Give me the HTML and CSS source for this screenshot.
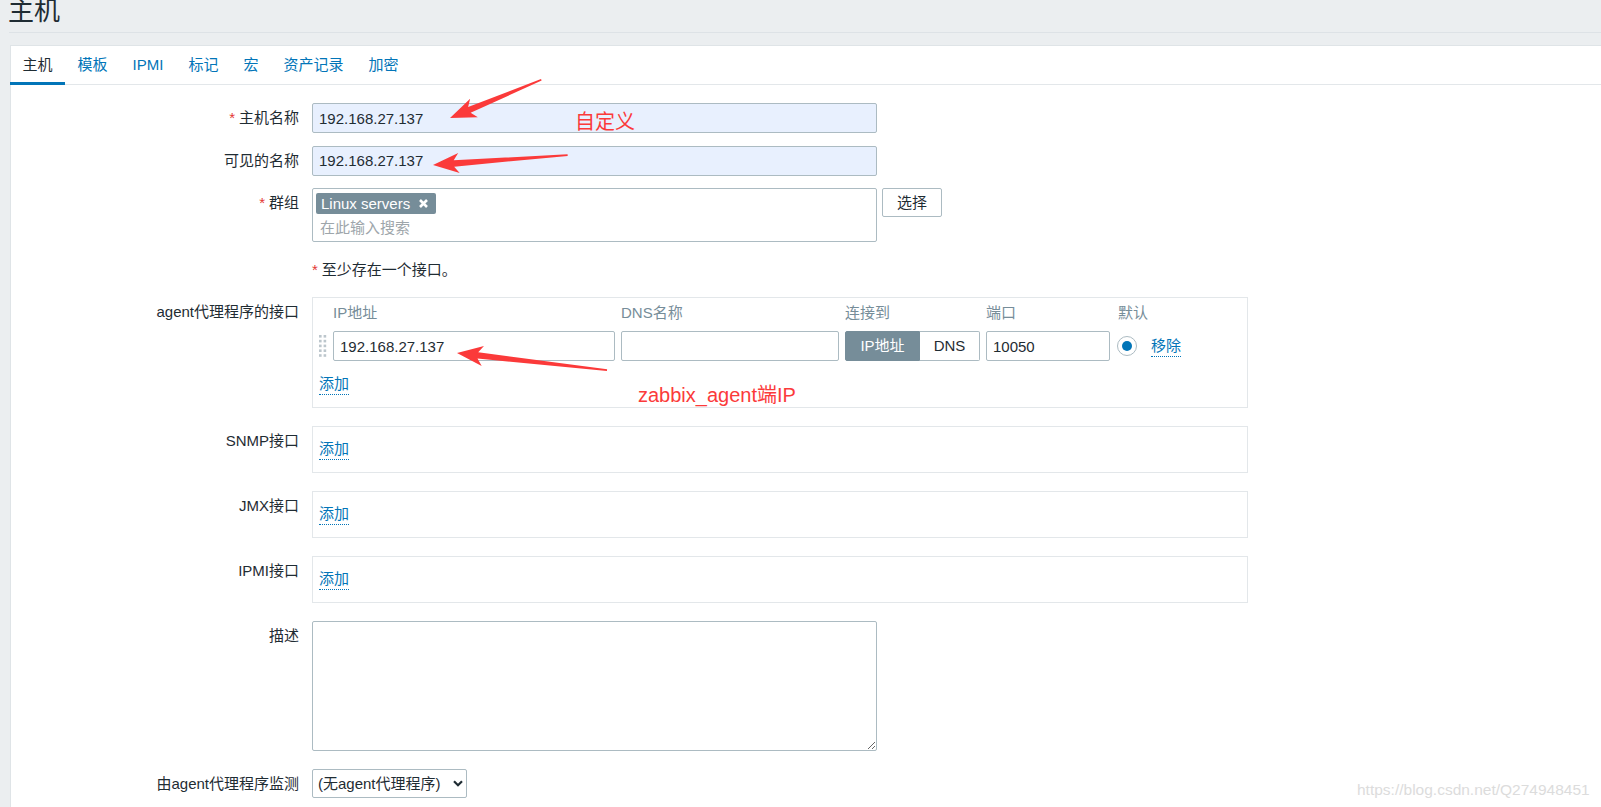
FILE: index.html
```html
<!DOCTYPE html>
<html lang="zh-CN">
<head>
<meta charset="utf-8">
<title>主机</title>
<link rel="stylesheet" href="styles.css">
</head>
<body>
<header class="page-header">
  <h1 class="page-title">主机</h1>
</header>
<main class="panel">
  <nav class="tabs">
    <a class="tab tab-active">主机</a>
    <a class="tab">模板</a>
    <a class="tab">IPMI</a>
    <a class="tab">标记</a>
    <a class="tab">宏</a>
    <a class="tab">资产记录</a>
    <a class="tab">加密</a>
  </nav>
  <form class="form">
    <div class="row">
      <div class="label"><span class="req">*</span>主机名称</div>
      <input class="input input-wide input-autofill" type="text" value="192.168.27.137">
    </div>
    <div class="row">
      <div class="label">可见的名称</div>
      <input class="input input-wide input-autofill" type="text" value="192.168.27.137">
    </div>
    <div class="row">
      <div class="label"><span class="req">*</span>群组</div>
      <div class="field-inline">
        <div class="multiselect">
          <div class="ms-tags">
            <span class="tag">Linux servers<svg class="tag-x" width="9" height="9" viewBox="0 0 9 9"><path d="M1 1 L8 8 M8 1 L1 8" stroke="#fff" stroke-width="2.6" fill="none"/></svg></span>
          </div>
          <div class="ms-placeholder">在此输入搜索</div>
        </div>
        <button type="button" class="btn">选择</button>
      </div>
    </div>
    <div class="row">
      <div class="label"></div>
      <div class="note"><span class="req">*</span>至少存在一个接口。</div>
    </div>
    <div class="row">
      <div class="label">agent代理程序的接口</div>
      <div class="iface iface-agent">
        <div class="iface-grid iface-head">
          <span></span><span>IP地址</span><span>DNS名称</span><span>连接到</span><span>端口</span><span class="head-default">默认</span><span></span>
        </div>
        <div class="iface-grid iface-line">
          <svg class="drag" width="8" height="22" viewBox="0 0 8 22">
            <g fill="#bcc6cc">
              <rect x="0" y="0" width="2.6" height="2.6"/><rect x="4.6" y="0" width="2.6" height="2.6"/>
              <rect x="0" y="4.8" width="2.6" height="2.6"/><rect x="4.6" y="4.8" width="2.6" height="2.6"/>
              <rect x="0" y="9.6" width="2.6" height="2.6"/><rect x="4.6" y="9.6" width="2.6" height="2.6"/>
              <rect x="0" y="14.4" width="2.6" height="2.6"/><rect x="4.6" y="14.4" width="2.6" height="2.6"/>
              <rect x="0" y="19.2" width="2.6" height="2.6"/><rect x="4.6" y="19.2" width="2.6" height="2.6"/>
            </g>
          </svg>
          <input class="input" type="text" value="192.168.27.137">
          <input class="input" type="text" value="">
          <div class="seg"><span class="seg-btn seg-on">IP地址</span><span class="seg-btn">DNS</span></div>
          <input class="input" type="text" value="10050">
          <span class="radio"></span>
          <a class="link link-remove">移除</a>
        </div>
        <div class="iface-add"><a class="link">添加</a></div>
      </div>
    </div>
    <div class="row row-lg">
      <div class="label">SNMP接口</div>
      <div class="iface iface-empty"><a class="link">添加</a></div>
    </div>
    <div class="row row-lg">
      <div class="label">JMX接口</div>
      <div class="iface iface-empty"><a class="link">添加</a></div>
    </div>
    <div class="row row-lg">
      <div class="label">IPMI接口</div>
      <div class="iface iface-empty"><a class="link">添加</a></div>
    </div>
    <div class="row row-lg">
      <div class="label">描述</div>
      <textarea class="textarea"></textarea>
    </div>
    <div class="row row-lg">
      <div class="label">由agent代理程序监测</div>
      <div class="select-wrap">
        <select class="select"><option>(无agent代理程序)</option></select>
        <svg class="select-arrow" width="10" height="7" viewBox="0 0 10 7"><path d="M1 1.2 L5 5.2 L9 1.2" stroke="#1f2c33" stroke-width="2.2" fill="none"/></svg>
      </div>
    </div>
  </form>
</main>

<svg class="annotations" width="1601" height="807" viewBox="0 0 1601 807">
  <g fill="#fb3a3a">
    <polygon transform="translate(450 118) rotate(-22.7)" points="0,0 26,-10 21,-3.2 99,-0.8 99,0.8 21,3.2 26,10"/>
    <polygon transform="translate(433 165) rotate(-4.2)" points="0,0 26,-10 21,-3.2 135,-0.8 135,0.8 21,3.2 26,10"/>
    <polygon transform="translate(457 353) rotate(6.5)" points="0,0 26,-10 21,-3.2 151,-0.8 151,0.8 21,3.2 26,10"/>
  </g>
</svg>
<div class="red-note red-note-1">自定义</div>
<div class="red-note red-note-2">zabbix_agent端IP</div>
<div class="watermark">https://blog.csdn.net/Q274948451</div>
</body>
</html>
```
FILE: styles.css
```css
* { box-sizing: border-box; }
html, body { margin: 0; padding: 0; }
html { overflow: hidden; }
body {
  position: relative;
  width: 1601px;
  height: 807px;
  overflow: hidden;
  background: #ebeef0;
  color: #1f2c33;
  font-family: "Liberation Sans", "Noto Sans CJK SC", sans-serif;
  font-size: 15px;
  line-height: 20px;
}

.page-header {
  display: flow-root;
  height: 33px;
  margin-left: 9px;
  border-bottom: 1px solid #dde2e6;
}
.page-title {
  margin: -2px 0 0 -1px;
  font-size: 26px;
  line-height: 26px;
  font-weight: normal;
  color: #1f2c33;
}

.panel {
  margin: 12px 0 0 10px;
  height: 800px;
  background: #fff;
  border: 1px solid #dfe4e7;
  border-right: 0;
}

.tabs {
  display: flex;
  align-items: flex-start;
  height: 39px;
  margin-left: -1px;
  border-bottom: 1px solid #e3e7ea;
}
.tab {
  display: block;
  height: 39px;
  padding: 2px 12.5px 0;
  line-height: 34px;
  border-bottom: 3px solid transparent;
  color: #0275b8;
  text-decoration: none;
  white-space: nowrap;
}
.tab-active {
  color: #1f2c33;
  border-bottom-color: #0275b8;
}

.form { padding-top: 18px; }
.row {
  display: flex;
  align-items: flex-start;
}
.row + .row { margin-top: 12.5px; }
.row.row-lg { margin-top: 18px; }

.label {
  flex: 0 0 288px;
  margin-right: 13px;
  text-align: right;
  line-height: 30px;
  white-space: nowrap;
}
.req {
  color: #e33734;
  margin-right: 4px;
}

.input {
  height: 30px;
  padding: 0 6px;
  border: 1px solid #acbbc2;
  border-radius: 2px;
  background: #fff;
  color: #1f2c33;
  font: inherit;
  outline: none;
}
.input-wide { width: 565px; }
.input-autofill { background: #e8f0fe; }

.field-inline {
  display: flex;
  align-items: flex-start;
  gap: 5px;
}
.multiselect {
  width: 565px;
  height: 54px;
  border: 1px solid #acbbc2;
  border-radius: 2px;
  padding: 4px 3px 3px;
}
.ms-tags { display: flex; }
.tag {
  display: flex;
  align-items: center;
  gap: 9px;
  height: 21px;
  padding: 0 8px 0 5px;
  border-radius: 2px;
  background: #768d99;
  color: #fff;
  line-height: 21px;
}
.tag-x { display: block; }
.ms-placeholder {
  margin-top: 4px;
  padding-left: 4px;
  line-height: 20px;
  color: #9ea6ab;
}
.btn {
  height: 29px;
  padding: 0 14px;
  border: 1px solid #acbbc2;
  border-radius: 2px;
  background: #fff;
  color: #1f2c33;
  font: inherit;
}

.note { line-height: 30px; }

.iface {
  width: 936px;
  border: 1px solid #e3e7ea;
}
.iface-agent { padding: 6px 6px 12px; }
.iface-grid {
  display: grid;
  grid-template-columns: 8px 282px 218px 135px 124px 20px auto;
  column-gap: 6px;
  align-items: center;
}
.iface-head {
  color: #768d99;
  line-height: 18px;
}
.head-default { margin-left: 2px; white-space: nowrap; }
.iface-line { margin-top: 9px; }
.iface-line .input { width: 100%; }
.drag { display: block; }

.seg {
  display: flex;
  height: 30px;
}
.seg-btn {
  display: flex;
  align-items: center;
  justify-content: center;
  width: 60px;
  border: 1px solid #acbbc2;
  border-left: 0;
  border-radius: 0 2px 2px 0;
  background: #fff;
  color: #1f2c33;
}
.seg-btn.seg-on {
  width: 75px;
  border: 1px solid #768d99;
  border-radius: 2px 0 0 2px;
  background: #768d99;
  color: #fff;
}

.radio {
  display: flex;
  align-items: center;
  justify-content: center;
  width: 20px;
  height: 20px;
  margin-left: 1px;
  border: 1px solid #acbbc2;
  border-radius: 50%;
  background: #fff;
}
.radio::after {
  content: "";
  width: 10px;
  height: 10px;
  border-radius: 50%;
  background: #0275b8;
}

.link {
  color: #0275b8;
  text-decoration: none;
  border-bottom: 1px dotted #0275b8;
  line-height: 20px;
  white-space: nowrap;
}
.link-remove {
  justify-self: start;
  margin-left: 9px;
}
.iface-add {
  display: flex;
  margin-top: 13px;
}
.iface-empty {
  display: flex;
  padding: 12px 6px;
}

.textarea {
  display: block;
  width: 565px;
  height: 130px;
  border: 1px solid #acbbc2;
  border-radius: 2px;
  font: inherit;
  color: #1f2c33;
  resize: both;
}

.select-wrap {
  position: relative;
  width: 155px;
  height: 29px;
}
.select {
  -webkit-appearance: none;
  appearance: none;
  width: 155px;
  height: 29px;
  padding: 0 22px 0 5px;
  border: 1px solid #acbbc2;
  border-radius: 2px;
  background: #fff;
  color: #1f2c33;
  font: inherit;
}
.select-arrow {
  position: absolute;
  right: 4px;
  top: 11px;
  pointer-events: none;
}

.annotations {
  position: absolute;
  left: 0;
  top: 0;
  pointer-events: none;
}
.red-note {
  position: absolute;
  color: #fb3a3a;
  font-size: 20px;
  line-height: 20px;
  white-space: nowrap;
}
.red-note-1 { left: 575px; top: 112px; }
.red-note-2 { left: 638px; top: 385px; }

.watermark {
  position: absolute;
  left: 1357px;
  top: 782px;
  font-size: 15.5px;
  line-height: 16px;
  color: #dcdcdc;
  white-space: nowrap;
}
```
